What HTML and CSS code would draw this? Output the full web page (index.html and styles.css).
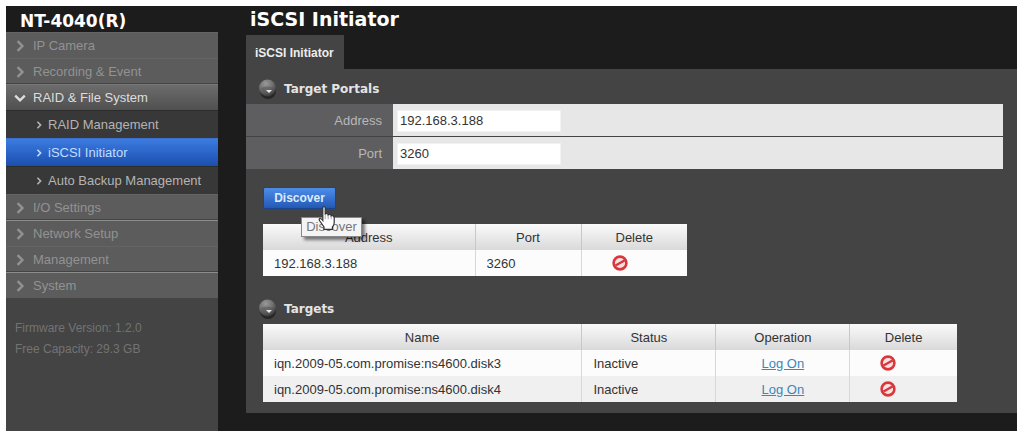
FILE: index.html
```html
<!DOCTYPE html>
<html lang="en">
<head>
    <meta charset="UTF-8">
    <meta name="viewport" content="width=device-width, initial-scale=1.0">
    <title>iSCSI Initiator</title>
    <link rel="stylesheet" href="styles.css">
</head>
<body>
    <!-- Shared icons -->
    <svg class="icon-defs" width="0" height="0" aria-hidden="true">
        <defs>
            <radialGradient id="ball-fill" cx="0.4" cy="0.25" r="0.8">
                <stop offset="0" stop-color="#999999"/>
                <stop offset="0.5" stop-color="#707070"/>
                <stop offset="1" stop-color="#333333"/>
            </radialGradient>
        </defs>
        <symbol id="icon-ball" viewBox="0 0 20 20">
            <ellipse cx="10" cy="12" rx="8" ry="8" fill="#262626"/>
            <circle cx="9.5" cy="9" r="8.5" fill="url(#ball-fill)"/>
            <path d="M3 9 Q9 6 16 9 Q15 15 10 15 Q5 14 3 9Z" fill="#555555" opacity="0.5"/>
            <path d="M8 11 H14 L11 14Z" fill="#e8e8e8"/>
        </symbol>
        <symbol id="icon-delete" viewBox="0 0 16 16">
            <circle cx="8" cy="8" r="6.4" fill="#fbe0e0" stroke="#d8383c" stroke-width="2.6"/>
            <path d="M3.5 10.5 L12.5 5.5" stroke="#d8383c" stroke-width="2.4"/>
        </symbol>
    </svg>

    <div class="frame">
        <aside class="sidebar">
            <h2 class="device">NT-4040(R)</h2>
            <nav class="menu">
                <a class="item" href="#"><svg class="arrow" viewBox="0 0 10 10"><path d="M3 1 L7 5 L3 9"/></svg>IP Camera</a>
                <a class="item" href="#"><svg class="arrow" viewBox="0 0 10 10"><path d="M3 1 L7 5 L3 9"/></svg>Recording &amp; Event</a>
                <a class="item open" href="#"><svg class="arrow" viewBox="0 0 10 10"><path d="M1 3 L5 7 L9 3"/></svg>RAID &amp; File System</a>
                <a class="subitem" href="#"><svg class="arrow small" viewBox="0 0 10 10"><path d="M3 1 L7 5 L3 9"/></svg>RAID Management</a>
                <a class="subitem active" href="#"><svg class="arrow small" viewBox="0 0 10 10"><path d="M3 1 L7 5 L3 9"/></svg>iSCSI Initiator</a>
                <a class="subitem" href="#"><svg class="arrow small" viewBox="0 0 10 10"><path d="M3 1 L7 5 L3 9"/></svg>Auto Backup Management</a>
                <a class="item" href="#"><svg class="arrow" viewBox="0 0 10 10"><path d="M3 1 L7 5 L3 9"/></svg>I/O Settings</a>
                <a class="item lined" href="#"><svg class="arrow" viewBox="0 0 10 10"><path d="M3 1 L7 5 L3 9"/></svg>Network Setup</a>
                <a class="item" href="#"><svg class="arrow" viewBox="0 0 10 10"><path d="M3 1 L7 5 L3 9"/></svg>Management</a>
                <a class="item lined" href="#"><svg class="arrow" viewBox="0 0 10 10"><path d="M3 1 L7 5 L3 9"/></svg>System</a>
            </nav>
            <div class="info">
                <p>Firmware Version: 1.2.0</p>
                <p>Free Capacity: 29.3 GB</p>
            </div>
        </aside>

        <main class="main">
            <h1 class="title">iSCSI Initiator</h1>
            <a class="tab" href="#">iSCSI Initiator</a>

            <div class="panel">
                <h3 class="section-title"><svg class="ball"><use href="#icon-ball"/></svg>Target Portals</h3>
                <form class="portal-form">
                    <div class="field">
                        <label for="address">Address</label>
                        <div class="value"><input type="text" id="address" value="192.168.3.188"></div>
                    </div>
                    <div class="field">
                        <label for="port">Port</label>
                        <div class="value"><input type="text" id="port" value="3260"></div>
                    </div>
                </form>

                <div class="discover">
                    <button type="button" class="discover-button">Discover</button>
                    <div class="tooltip">Discover</div>
                    <svg class="pointer" viewBox="0 0 14 20">
                        <path d="M3.5 1.5 Q3.5 0.5 4.5 0.5 Q5.5 0.5 5.5 1.5 V7 Q6 6 7 6.3 Q8 6.5 8 7.5 Q9 6.5 10 7.2 Q10.5 7.6 10.5 8.4 Q11.5 7.8 12.3 8.4 Q13 9 13 10 V14 Q13 16 11.5 17.5 V19.5 H4.5 V17.5 L1 12.5 Q0 11 1 10.5 Q2 10 3.5 12 Z" fill="#ffffff" stroke="#333333"/>
                        <path d="M5.5 7 V11 M8 7.5 V11 M10.5 8.4 V11" fill="none" stroke="#999999" stroke-width="0.7"/>
                    </svg>
                </div>

                <table class="list portals">
                    <colgroup><col class="half"><col class="quarter"><col class="quarter"></colgroup>
                    <thead>
                        <tr><th>Address</th><th>Port</th><th>Delete</th></tr>
                    </thead>
                    <tbody>
                        <tr>
                            <td>192.168.3.188</td>
                            <td>3260</td>
                            <td class="remove"><button type="button" class="delete" aria-label="Delete"><svg><use href="#icon-delete"/></svg></button></td>
                        </tr>
                    </tbody>
                </table>

                <h3 class="section-title targets-title"><svg class="ball"><use href="#icon-ball"/></svg>Targets</h3>
                <table class="list targets">
                    <colgroup><col><col class="wide"><col class="wide"><col class="narrow"></colgroup>
                    <thead>
                        <tr><th>Name</th><th>Status</th><th>Operation</th><th>Delete</th></tr>
                    </thead>
                    <tbody>
                        <tr>
                            <td>iqn.2009-05.com.promise:ns4600.disk3</td>
                            <td>Inactive</td>
                            <td class="center"><a href="#">Log On</a></td>
                            <td class="remove"><button type="button" class="delete" aria-label="Delete"><svg><use href="#icon-delete"/></svg></button></td>
                        </tr>
                        <tr>
                            <td>iqn.2009-05.com.promise:ns4600.disk4</td>
                            <td>Inactive</td>
                            <td class="center"><a href="#">Log On</a></td>
                            <td class="remove"><button type="button" class="delete" aria-label="Delete"><svg><use href="#icon-delete"/></svg></button></td>
                        </tr>
                    </tbody>
                </table>
            </div>
        </main>
    </div>
</body>
</html>
```
FILE: styles.css
```css
* {
    box-sizing: border-box;
}
body {
    margin: 0;
    padding: 6px 4px 0 6px;
    background-color: #fff;
    font-family: "Liberation Sans", Arial, sans-serif;
    font-size: 13px;
    color: #333;
}
h1, h2, h3, p {
    margin: 0;
}
a {
    text-decoration: none;
}
.icon-defs {
    position: absolute;
}
.frame {
    display: flex;
    background-color: #1c1c1c;
}

/* Sidebar */
.sidebar {
    width: 212px;
    flex-shrink: 0;
    margin-right: 28px;
    background-color: #444;
}
.device {
    height: 26px;
    padding-left: 14px;
    background-color: #1c1c1c;
    color: #fff;
    font-family: "DejaVu Sans", Verdana, sans-serif;
    font-size: 17px;
    line-height: 30px;
}
.menu {
    display: flex;
    flex-direction: column;
}
.item, .subitem {
    display: flex;
    align-items: center;
}
.item {
    height: 26px;
    padding-left: 8px;
    gap: 7px;
    background-color: #5c5c5c;
    border-top: 1px solid #646464;
    color: #929292;
}
.lined {
    border-top-color: #8c8c8c;
    box-shadow: 0 -1px #444;
}
.open {
    background: linear-gradient(#6c6c6c, #505050);
    border-top-color: #777;
    box-shadow: 0 -1px #444;
    color: #ddd;
}
.subitem {
    height: 28px;
    padding-left: 28px;
    gap: 4px;
    background-color: #383838;
    border-top: 1px solid #2c2c2c;
    color: #b4b4b4;
}
.active {
    background: linear-gradient(#3b7be0, #1b4fae);
    border-top-color: #3a70cc;
    color: #c4dcff;
}
.arrow {
    width: 12px;
    height: 12px;
    fill: none;
    stroke: currentColor;
    stroke-width: 2;
}
.small {
    width: 10px;
    height: 8px;
}
.info {
    padding: 20px 9px;
    font-size: 12px;
    line-height: 21px;
    color: #737373;
}

/* Main area */
.main {
    flex: 1;
    padding-bottom: 18px;
}
.title {
    height: 29px;
    padding-left: 4px;
    color: #fff;
    font-family: "DejaVu Sans", Verdana, sans-serif;
    font-size: 19px;
    line-height: 26px;
}
.tab {
    display: inline-block;
    height: 34px;
    padding: 0 10px 0 9px;
    background-color: #444;
    color: #eee;
    font-size: 12px;
    font-weight: bold;
    line-height: 37px;
    vertical-align: top;
}
.panel {
    padding-bottom: 11px;
    background-color: #444;
}
.section-title {
    display: flex;
    align-items: center;
    gap: 6px;
    height: 35px;
    padding: 5px 0 0 12px;
    color: #e4e4e4;
    font-family: "DejaVu Sans", Verdana, sans-serif;
    font-size: 12px;
}
.ball {
    width: 20px;
    height: 20px;
}

/* Portal form */
.portal-form {
    margin-right: 14px;
}
.field {
    display: flex;
    height: 33px;
    border-bottom: 1px solid #444;
}
.field label {
    width: 147px;
    padding-right: 11px;
    background-color: #5e5e60;
    color: #b8b8b8;
    line-height: 34px;
    text-align: right;
}
.value {
    display: flex;
    align-items: center;
    flex: 1;
    padding: 1px 4px 0;
    background-color: #e7e7e7;
}
.value input {
    width: 164px;
    height: 22px;
    padding: 0 2px;
    border: 1px solid #f2f2f2;
    background-color: #fff;
    color: #333;
    font-family: inherit;
    font-size: 13px;
}

/* Discover button, with its tooltip and the pointer over it */
.discover {
    position: relative;
    padding: 17px 0 15px 17px;
}
.discover-button {
    display: block;
    width: 73px;
    height: 22px;
    padding: 0;
    border: 1px solid #1b448e;
    border-radius: 2px;
    background: linear-gradient(#4d8de8, #2359b5);
    color: #dcebff;
    font-family: inherit;
    font-size: 12px;
    font-weight: bold;
}
.tooltip {
    position: absolute;
    left: 55px;
    top: 47px;
    width: 61px;
    height: 20px;
    border: 1px solid #888;
    background-color: #f4f4f4;
    box-shadow: 3px 3px 3px rgba(0, 0, 0, 0.5);
    color: #777;
    line-height: 18px;
    text-align: center;
}
.pointer {
    position: absolute;
    left: 72px;
    top: 36px;
    width: 18px;
    height: 24px;
}

/* Tables */
.list {
    margin-left: 17px;
    border-collapse: collapse;
    table-layout: fixed;
    background-color: #fcfcfc;
}
.list th {
    height: 26px;
    padding: 0;
    background: linear-gradient(#fafafa, #d9d9d9);
    border-right: 1px solid #c8c8c8;
    font-weight: normal;
}
.list td {
    height: 26px;
    padding: 0 11px;
    border-right: 1px solid #d8d8d8;
}
.list th:last-child, .list td:last-child {
    border-right: none;
}
.list .center {
    text-align: center;
}
.list .remove {
    padding-left: 30px;
}
.list a {
    color: #3a87b8;
    text-decoration: underline;
}
.portals {
    width: 55%;
}
.half {
    width: 50%;
}
.quarter {
    width: 25%;
}
.targets-title {
    height: 48px;
    padding-top: 18px;
}
.targets {
    width: 90%;
}
.targets tbody tr:nth-child(even) {
    background-color: #f0f0f0;
}
.wide {
    width: 134px;
}
.narrow {
    width: 107px;
}
.delete {
    display: block;
    padding: 0;
    border: none;
    background: none;
}
.delete svg {
    display: block;
    width: 16px;
    height: 16px;
}
```
